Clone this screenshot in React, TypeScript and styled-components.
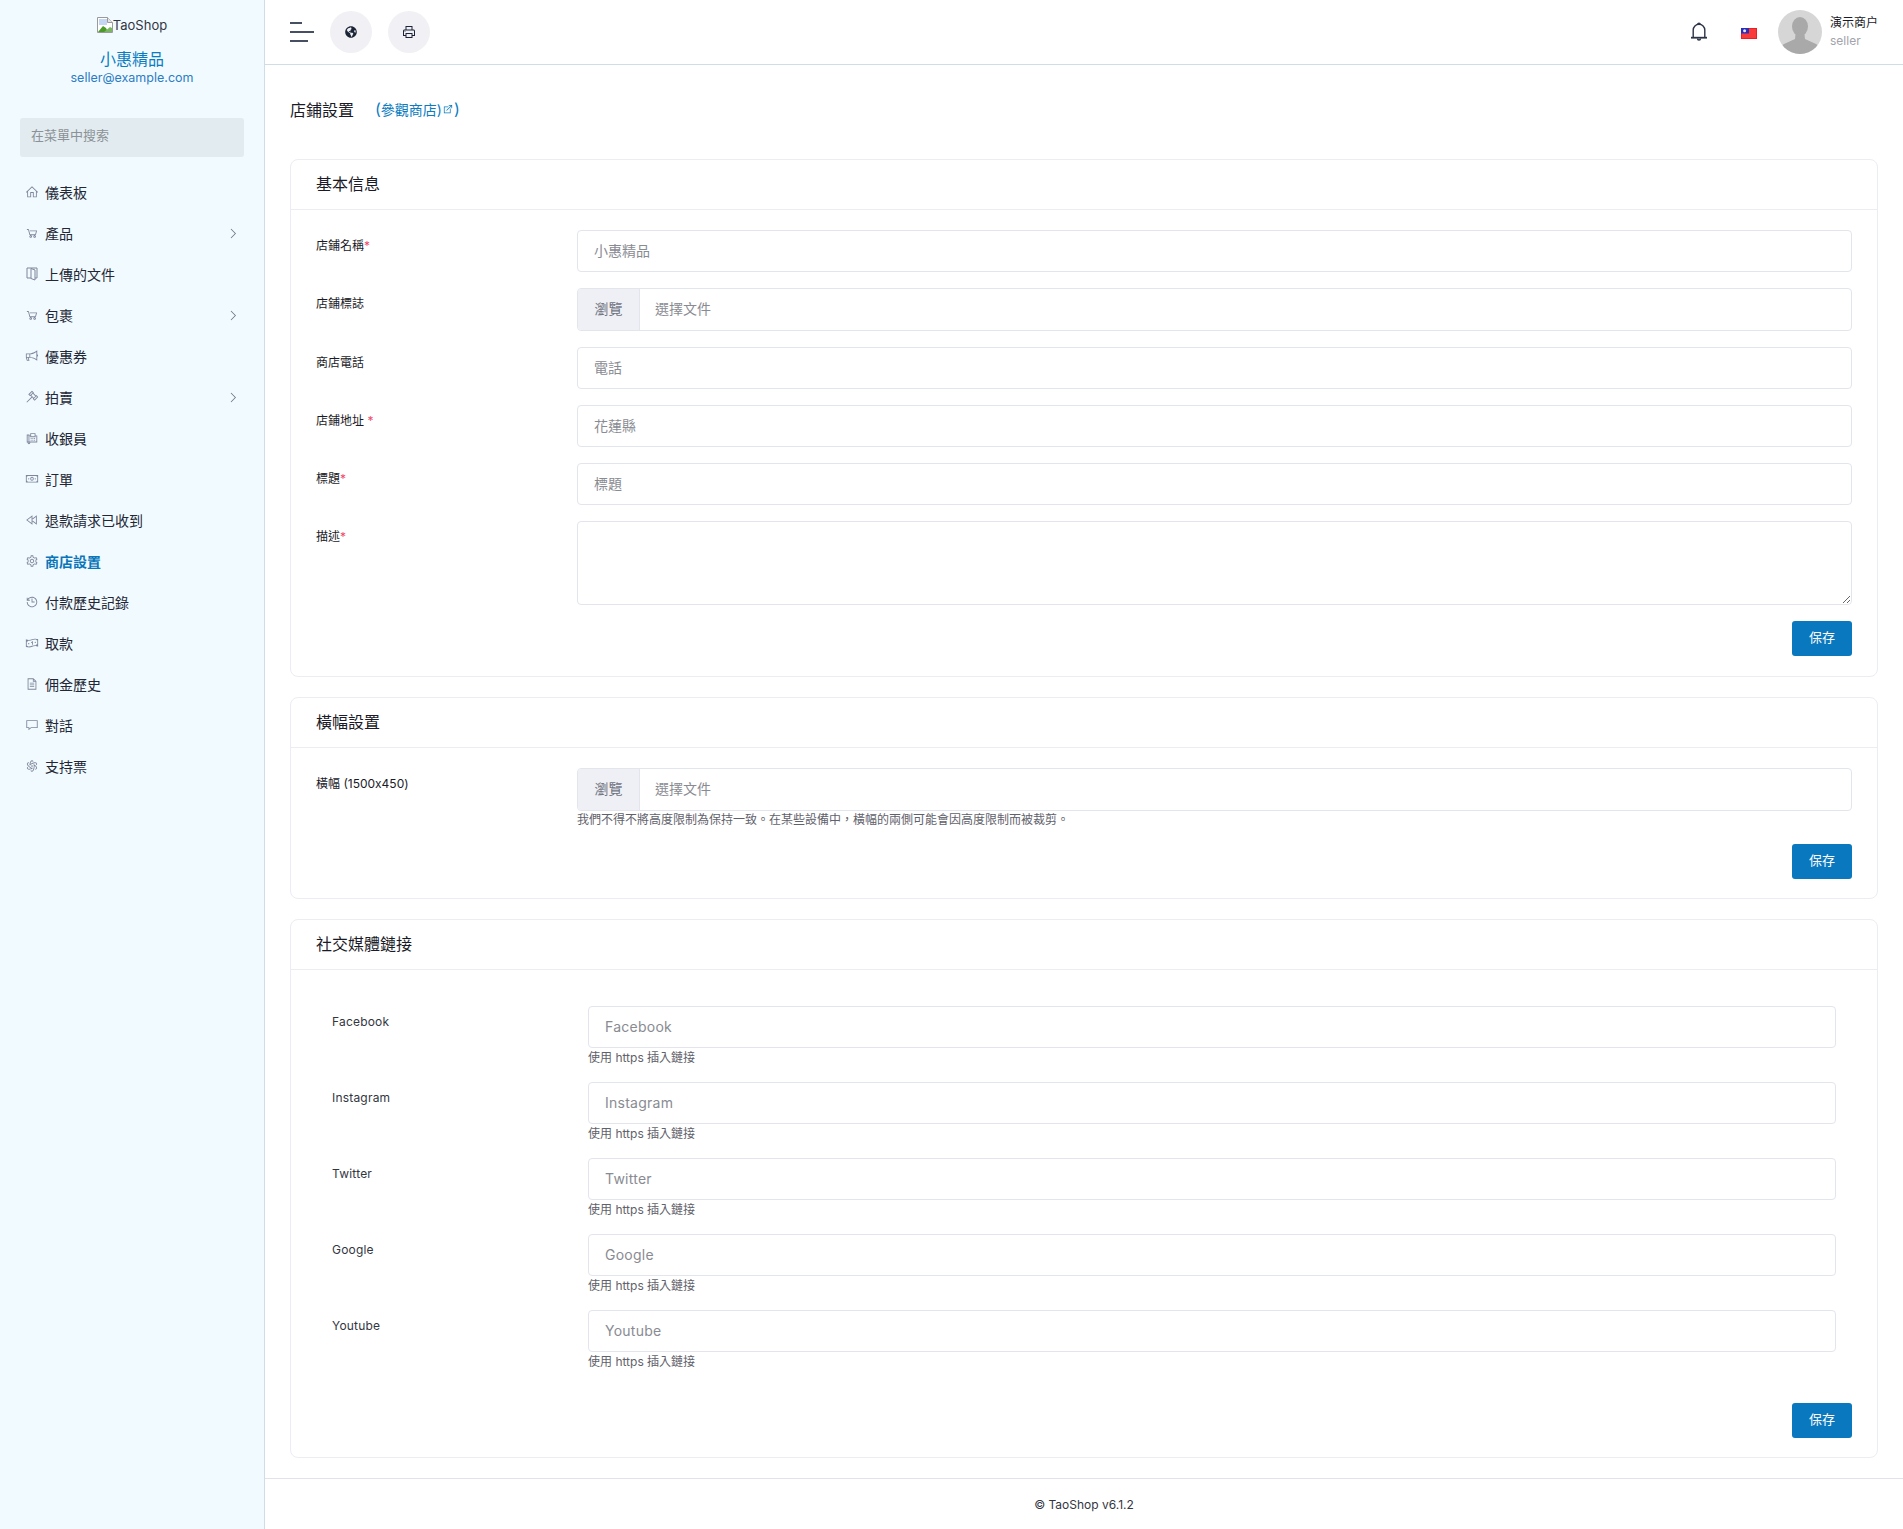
import React from "react";
import styled, { createGlobalStyle } from "styled-components";
import {
  LiaHomeSolid, LiaShoppingCartSolid, LiaBullhornSolid, LiaGavelSolid, LiaFaxSolid,
  LiaMoneyBillSolid, LiaBackwardSolid, LiaCogSolid, LiaHistorySolid, LiaMoneyBillWaveAltSolid, LiaFileAltSolid,
  LiaCommentAltSolid, LiaAtomSolid, LiaAngleRightSolid, LiaExternalLinkAltSolid, LiaPrintSolid,
} from "react-icons/lia";
import { FaGlobeAmericas } from "react-icons/fa";

const FONT = `Inter, "Noto Sans CJK TC", "Noto Sans", sans-serif`;

const Global = createGlobalStyle`
  html, body { margin: 0; padding: 0; background: #fff; }
  body { font-family: ${FONT}; color: #1b1b28; }
  * { box-sizing: border-box; }
`;

const Shell = styled.div`display: flex; min-height: 1529px; width: 1903px;`;
const Sidebar = styled.aside`
  width: 265px; flex: none; background: #f1faff; border-right: 1px solid #cfdde9;
  display: flex; flex-direction: column; padding-top: 15px;
`;
const Brand = styled.div`display: flex; flex-direction: column; align-items: center;`;
const LogoLine = styled.div`display: flex; align-items: center; height: 20px; font-size: 13px; color: #33363f;`;
const StoreName = styled.div`font-size: 16px; line-height: 22px; color: #0a7cbf; margin-top: 13px;`;
const StoreMail = styled.div`font-size: 12.5px; line-height: 16px; color: #2c7cc4;`;
const SearchBox = styled.input`
  margin: 32px 20px 0; width: 224px; height: 39px; flex: none; border: none; border-radius: 3px;
  background: #e2ebef; padding: 0 11px 5px; font: 13px ${FONT}; outline: none;
  &::placeholder { color: #8b9196; opacity: 1; }
`;
const Nav = styled.nav`display: flex; flex-direction: column; margin-top: 14px;`;
const NavItem = styled.div<{ $active?: boolean }>`
  height: 41px; display: flex; align-items: center; padding: 0 26px; gap: 7px; font-size: 14px;
  color: ${(p) => (p.$active ? "#0a75b8" : "#232734")};
  font-weight: ${(p) => (p.$active ? 600 : 400)};
  svg { flex: none; }
`;
const NavIcon = styled.span`display: flex; width: 12px; height: 14px; align-items: center; justify-content: center; color: #7f869b; font-size: 14px;`;
const NavLabel = styled.span`flex: 1;`;
const Chevron = styled.span`display: flex; color: #6e7382; font-size: 13px; margin-right: -1px; margin-top: 1px;`;

const Main = styled.main`flex: 1; min-width: 0; display: flex; flex-direction: column;`;
const Topbar = styled.header`
  height: 65px; flex: none; border-bottom: 1px solid #cfdde9; display: flex; align-items: center; padding: 0 23px 0 25px;
`;
const Burger = styled.div`display: flex; flex-direction: column; gap: 7px; width: 24px; margin-right: 16px;`;
const BurgerBar = styled.span<{ $w: number }>`display: block; height: 2px; width: ${(p) => p.$w}px; background: #475063;`;
const RoundBtn = styled.div<{ $size: number }>`
  width: 42px; height: 42px; border-radius: 50%; background: #f1f1f5; display: flex; align-items: center; justify-content: center;
  margin-right: 16px; font-size: ${(p) => p.$size}px; color: #1b2436;
`;
const Spacer = styled.div`flex: 1;`;
const TopIcon = styled.div`display: flex; width: 18px; margin-right: 33px;`;
const FlagBox = styled.div`display: flex; margin-right: 21px; margin-top: 2px;`;
const Avatar = styled.div`width: 44px; height: 44px; border-radius: 50%; overflow: hidden; margin-right: 8px; flex: none;`;
const UserBlock = styled.div`display: flex; flex-direction: column; width: 50px;`;
const UserName = styled.div`font-size: 12px; line-height: 18px; color: #1b1b28;`;
const UserRole = styled.div`font-size: 12px; line-height: 18px; color: #a2a3ab;`;

const Content = styled.div`flex: 1; padding: 0 25px; display: flex; flex-direction: column;`;
const TitleRow = styled.div`display: flex; align-items: center; height: 30px; margin-top: 29px; font-size: 16px;`;
const Title = styled.h1`margin: 0; font-size: 16px; font-weight: 400; color: #1b1b28; width: 85px;`;
const VisitLink = styled.span`font-size: 14px; color: #0a7cbf; display: inline-flex; align-items: center;`;
const Paren = styled.span`font-size: 16px;`;
const Card = styled.section<{ $h: number; $top: number }>`
  height: ${(p) => p.$h}px; margin-top: ${(p) => p.$top}px; border: 1px solid #ebedf3; border-radius: 8px; background: #fff;
  display: flex; flex-direction: column; flex: none;
`;
const CardHead = styled.div`height: 50px; flex: none; border-bottom: 1px solid #ebedf3; display: flex; align-items: center; padding: 0 25px 3px;`;
const CardTitle = styled.h2`margin: 0; font-size: 16px; font-weight: 400; color: #1b1b28;`;
const CardBody = styled.div<{ $top: number }>`padding: ${(p) => p.$top}px 25px 0 25px; display: flex; flex-direction: column;`;
const FormRow = styled.div<{ $gap?: number }>`
  display: grid; grid-template-columns: 261px 1fr; margin-bottom: ${(p) => p.$gap ?? 16}px;
`;
const Label = styled.label`font-size: 12px; line-height: 18px; color: #1b1b28; padding-top: 7px;`;
const Req = styled.span`color: #ef486a;`;
const Input = styled.input`
  display: block; width: 100%; height: 42px; border: 1px solid #e2e5ec; border-radius: 4px; padding: 0 16px 2px; font: 14px ${FONT}; color: #1b1b28; outline: none;
  &::placeholder { color: #898b92; opacity: 1; }
`;
const SocialInput = styled(Input)`letter-spacing: 0.25px;`;
const TextArea = styled.textarea`
  display: block; width: 100%; height: 84px; border: 1px solid #e2e5ec; border-radius: 4px; padding: 10px 16px; font: 14px ${FONT}; outline: none;
`;
const FileGroup = styled.div`display: flex; height: 43px; border: 1px solid #e2e5ec; border-radius: 4px; overflow: hidden; font-size: 14px;`;
const FileBtn = styled.div`width: 62px; flex: none; background: #eef0f5; color: #70737f; display: flex; align-items: center; justify-content: center; border-right: 1px solid #e2e5ec; padding-bottom: 4px;`;
const FileText = styled.div`flex: 1; display: flex; align-items: center; padding: 0 16px 4px 15px; color: #898b92;`;
const Hint = styled.div`font-size: 12px; line-height: 18px; color: #5f626b;`;
const SocialHint = styled(Hint)`margin-top: 1px;`;
const ActionRow = styled.div`display: flex; justify-content: flex-end;`;
const SaveBtn = styled.button`
  width: 60px; height: 35px; border: none; border-radius: 3px; background: #0a78be; color: #fff; font: 13px ${FONT}; padding: 0 0 4px;
`;
const SocialList = styled.div`padding: 0 16px 17px 16px; display: flex; flex-direction: column;`;
const SocialRow = styled.div`display: grid; grid-template-columns: 256px 1fr; height: 76px;`;
const SocialLabel = styled.label`font-size: 12px; line-height: 18px; color: #33363f; padding-top: 7px; letter-spacing: 0.2px;`;
const Footer = styled.footer`height: 51px; flex: none; border-top: 1px solid #e2e1ec; display: flex; align-items: center; justify-content: center; font-size: 12px; color: #33363f; margin-top: 20px;`;

const UploadIcon = () => (
  <svg width="12" height="14" viewBox="0 0 12 14" fill="none" stroke="currentColor" strokeWidth="1">
    <path d="M1 1h10v10H9" />
    <path d="M1 1v10h4" />
    <path d="M5 1.5l4 1.5v10l-4-1.5z" />
  </svg>
);

const menu = [
  { t: "儀表板", I: LiaHomeSolid },
  { t: "產品", I: LiaShoppingCartSolid, c: true },
  { t: "上傳的文件", I: UploadIcon },
  { t: "包裹", I: LiaShoppingCartSolid, c: true },
  { t: "優惠券", I: LiaBullhornSolid },
  { t: "拍賣", I: LiaGavelSolid, c: true },
  { t: "收銀員", I: LiaFaxSolid },
  { t: "訂單", I: LiaMoneyBillSolid },
  { t: "退款請求已收到", I: LiaBackwardSolid },
  { t: "商店設置", I: LiaCogSolid, a: true },
  { t: "付款歷史記錄", I: LiaHistorySolid },
  { t: "取款", I: LiaMoneyBillWaveAltSolid },
  { t: "佣金歷史", I: LiaFileAltSolid },
  { t: "對話", I: LiaCommentAltSolid },
  { t: "支持票", I: LiaAtomSolid },
];

const BrokenImage = () => (
  <svg width="16" height="16" viewBox="0 0 16 16">
    <path d="M.5.5h10l5 5v10H.5z" fill="#fff" stroke="#9a9a9a" />
    <path d="M10.5.5v5h5" fill="#e4e4e4" stroke="#9a9a9a" />
    <path d="M2 2h8v6H2z" fill="#c5d6f5" />
    <path d="M1 15l5-6 3 2 2 4z" fill="#4c9a2a" />
    <path d="M7 15l6-5 2 1v4z" fill="#7bb661" />
  </svg>
);

const Bell = () => (
  <svg width="18" height="20" viewBox="0 0 18 20" fill="none" stroke="#2b3345" strokeWidth="1.4">
    <path d="M3.2 15.5V8a5.8 5.8 0 0 1 11.6 0v7.5" />
    <path d="M7.8 2.3a1.2 1.2 0 0 1 2.4 0" />
    <path d="M1 15.7h16" strokeWidth="1.8" />
    <path d="M7.5 16.5a1.5 1.5 0 0 0 3 0" />
  </svg>
);

const Flag = () => (
  <svg width="16" height="11" viewBox="0 0 16 11">
    <rect width="16" height="11" fill="#ee1c25" />
    <rect x="1" y="1" width="14" height="9" fill="#f93a3a" />
    <rect width="8" height="5.5" fill="#2a2fb8" />
    <circle cx="3.6" cy="2.8" r="1.5" fill="#dfe6ff" />
  </svg>
);

const AvatarPic = () => (
  <svg width="44" height="44" viewBox="0 0 44 44">
    <rect width="44" height="44" fill="#d6d6d6" />
    <ellipse cx="22" cy="16.5" rx="8" ry="9.5" fill="#a9a9a9" />
    <path d="M17.5 24h9l.5 5 11 5c2 1 3 3 3.5 10h-39C3 37 4 35 6 34l11-5z" fill="#a9a9a9" />
  </svg>
);

const socials = ["Facebook", "Instagram", "Twitter", "Google", "Youtube"];

export default function App() {
  return (
    <Shell>
      <Global />
      <Sidebar>
        <Brand>
          <LogoLine><BrokenImage />TaoShop</LogoLine>
          <StoreName>小惠精品</StoreName>
          <StoreMail>seller@example.com</StoreMail>
        </Brand>
        <SearchBox placeholder="在菜單中搜索" />
        <Nav>
          {menu.map((m) => (
            <NavItem key={m.t} $active={m.a}>
              <NavIcon><m.I /></NavIcon>
              <NavLabel>{m.t}</NavLabel>
              {m.c && <Chevron><LiaAngleRightSolid /></Chevron>}
            </NavItem>
          ))}
        </Nav>
      </Sidebar>
      <Main>
        <Topbar>
          <Burger>
            <BurgerBar $w={12} />
            <BurgerBar $w={24} />
            <BurgerBar $w={18} />
          </Burger>
          <RoundBtn $size={12}><FaGlobeAmericas /></RoundBtn>
          <RoundBtn $size={16}><LiaPrintSolid /></RoundBtn>
          <Spacer />
          <TopIcon><Bell /></TopIcon>
          <FlagBox><Flag /></FlagBox>
          <Avatar><AvatarPic /></Avatar>
          <UserBlock>
            <UserName>演示商户</UserName>
            <UserRole>seller</UserRole>
          </UserBlock>
        </Topbar>
        <Content>
          <TitleRow>
            <Title>店鋪設置</Title>
            <VisitLink>
              <Paren>(</Paren>參觀商店)<LiaExternalLinkAltSolid size={12} /><Paren>)</Paren>
            </VisitLink>
          </TitleRow>
          <Card $h={518} $top={35}>
            <CardHead><CardTitle>基本信息</CardTitle></CardHead>
            <CardBody $top={20}>
              <FormRow>
                <Label>店鋪名稱<Req>*</Req></Label>
                <Input placeholder="小惠精品" />
              </FormRow>
              <FormRow>
                <Label>店鋪標誌</Label>
                <FileGroup><FileBtn>瀏覽</FileBtn><FileText>選擇文件</FileText></FileGroup>
              </FormRow>
              <FormRow>
                <Label>商店電話</Label>
                <Input placeholder="電話" />
              </FormRow>
              <FormRow>
                <Label>店鋪地址 <Req>*</Req></Label>
                <Input placeholder="花蓮縣" />
              </FormRow>
              <FormRow>
                <Label>標題<Req>*</Req></Label>
                <Input placeholder="標題" />
              </FormRow>
              <FormRow>
                <Label>描述<Req>*</Req></Label>
                <TextArea />
              </FormRow>
              <ActionRow><SaveBtn>保存</SaveBtn></ActionRow>
            </CardBody>
          </Card>
          <Card $h={202} $top={20}>
            <CardHead><CardTitle>橫幅設置</CardTitle></CardHead>
            <CardBody $top={20}>
              <FormRow $gap={15}>
                <Label>橫幅 (1500x450)</Label>
                <div>
                  <FileGroup><FileBtn>瀏覽</FileBtn><FileText>選擇文件</FileText></FileGroup>
                  <Hint>我們不得不將高度限制為保持一致。在某些設備中，橫幅的兩側可能會因高度限制而被裁剪。</Hint>
                </div>
              </FormRow>
              <ActionRow><SaveBtn>保存</SaveBtn></ActionRow>
            </CardBody>
          </Card>
          <Card $h={539} $top={20}>
            <CardHead><CardTitle>社交媒體鏈接</CardTitle></CardHead>
            <CardBody $top={36}>
              <SocialList>
                {socials.map((s) => (
                  <SocialRow key={s}>
                    <SocialLabel>{s}</SocialLabel>
                    <div>
                      <SocialInput placeholder={s} />
                      <SocialHint>使用 https 插入鏈接</SocialHint>
                    </div>
                  </SocialRow>
                ))}
              </SocialList>
              <ActionRow><SaveBtn>保存</SaveBtn></ActionRow>
            </CardBody>
          </Card>
        </Content>
        <Footer>© TaoShop v6.1.2</Footer>
      </Main>
    </Shell>
  );
}
